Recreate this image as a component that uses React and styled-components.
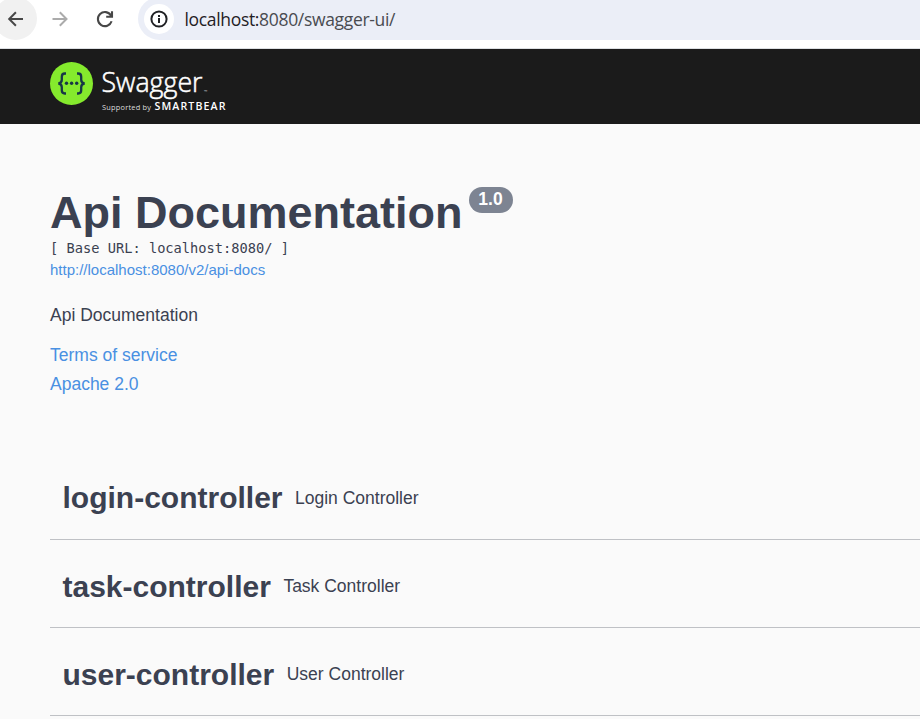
import React from "react";
import styled, { createGlobalStyle } from "styled-components";

const GlobalStyle = createGlobalStyle`
  * { box-sizing: border-box; }
  html, body { margin: 0; padding: 0; overflow: hidden; background: #fafafa; }
  body { font-family: "Liberation Sans", Arial, sans-serif; color: #3b4151; }
`;

const Page = styled.div`
  width: 100%;
  height: 100vh;
  overflow: hidden;
  white-space: nowrap;
`;

const BrowserBar = styled.div`
  display: flex;
  align-items: flex-start;
  height: 49px;
  background: #fff;
  border-bottom: 1px solid #dcdfe3;
`;

const NavButton = styled.button`
  flex: none;
  display: flex;
  align-items: center;
  justify-content: center;
  width: 43px;
  height: 43px;
  margin: -3px ${(p) => p.$gap}px 0 0;
  padding: 0;
  border: 0;
  border-radius: 50%;
  background: ${(p) => (p.$active ? "#f1f1f1" : "transparent")};
  color: ${(p) => p.$color};

  &:first-child { margin-left: -6px; }
`;

const AddressBar = styled.div`
  flex: 1;
  display: flex;
  align-items: center;
  height: 43px;
  margin-top: -3px;
  padding-left: 6px;
  background: #ebeef7;
  border-radius: 22px 0 0 22px;
`;

const SiteInfo = styled.div`
  display: flex;
  align-items: center;
  justify-content: center;
  width: 30px;
  height: 30px;
  margin: 1px 10.5px 0 0;
  border-radius: 50%;
  background: #fff;
`;

const Address = styled.span`
  font: 17.5px/24px "Open Sans", "Noto Sans", sans-serif;
  letter-spacing: -0.33px;
  color: #494b50;
  padding-top: 1px;
`;

const Host = styled.span`
  color: #1f2024;
`;

const TopBar = styled.header`
  height: 75px;
  padding: 12px 0 0 50px;
  background: #1b1b1b;
`;

const LogoSvg = styled.svg`
  display: block;
  overflow: visible;
`;

const Info = styled.section`
  padding: 62px 0 0 50px;
  height: 335px;
`;

const Title = styled.h1`
  display: flex;
  align-items: flex-start;
  gap: 6px;
  height: 52px;
  margin: 0;
  font-size: 45px;
  line-height: 54px;
  font-weight: 700;
`;

const Version = styled.span`
  width: 44px;
  height: 26px;
  margin-top: 1px;
  border-radius: 13px;
  background: #7d8492;
  color: #fff;
  font-size: 17.5px;
  line-height: 25px;
  text-align: center;
`;

const BaseUrl = styled.pre`
  margin: 0;
  height: 21px;
  font: 13.7px/21px "DejaVu Sans Mono", monospace;
`;

const Link = styled.a`
  display: block;
  width: max-content;
  color: #4990e2;
  text-decoration: none;
  font-size: ${(p) => (p.$small ? 15 : 17.5)}px;
  line-height: ${(p) => (p.$small ? 22 : 29)}px;
`;

const Description = styled.p`
  margin: 24px 0 16px;
  font-size: 17.5px;
  line-height: 20px;
  height: 20px;
`;

const TagList = styled.main`
  padding-left: 50px;
`;

const TagNote = styled.small`
  margin-left: 12.5px;
  font-size: 17.5px;
  font-weight: 400;
  line-height: 20px;
  padding-bottom: 2px;
`;

const Tag = styled.h3`
  display: flex;
  align-items: center;
  height: 88px;
  margin: 0;
  padding: 7px 12.5px 0;
  border-bottom: 1px solid #bfc1c5;
  font-size: 30px;
  line-height: 36px;

  &:first-child { height: 81px; padding: 0 12.5px 2px; }
  &:first-child ${TagNote} { padding-bottom: 1px; }
`;

const BackIcon = () => (
  <svg width="18" height="18" viewBox="0 0 18 18" fill="none" stroke="currentColor" strokeWidth="2">
    <path d="M16 9H2.5M8.9 2.3 2.2 9l6.7 6.7" />
  </svg>
);

const ForwardIcon = () => (
  <svg width="18" height="18" viewBox="0 0 18 18" fill="none" stroke="currentColor" strokeWidth="2">
    <path d="M1.5 9H15M8.8 2.3 15.5 9l-6.7 6.7" />
  </svg>
);

const ReloadIcon = () => (
  <svg width="18" height="18" viewBox="0 0 18 18" fill="none" stroke="currentColor" strokeWidth="2.1">
    <path d="M15 5.6A7 7 0 1 0 15.6 11.2M16 1.2v5.6h-5.8" />
  </svg>
);

const InfoIcon = () => (
  <svg width="18" height="18" viewBox="0 0 18 18" fill="none" stroke="#202124" strokeWidth="2">
    <circle cx="9" cy="9" r="7.6" />
    <path d="M9 8v5M9 5v2" />
  </svg>
);

const Logo = () => (
  <LogoSvg width="180" height="54" viewBox="0 0 180 54">
    <circle cx="21.5" cy="22.5" r="21.5" fill="#85ea2d" />
    <g fill="none" stroke="#173647" strokeWidth="2.3">
      <path d="M16 12.5h-1.2q-3 0-3 3.2v3.1q0 3.2-3.4 3.7 3.4.5 3.4 3.7v3.1q0 3.2 3 3.2H16" />
      <path d="M27 12.5h1.2q3 0 3 3.2v3.1q0 3.2 3.4 3.7-3.4.5-3.4 3.7v3.1q0 3.2-3 3.2H27" />
    </g>
    <g fill="#173647">
      <circle cx="16.5" cy="22.3" r="1.7" />
      <circle cx="21.6" cy="22.3" r="1.7" />
      <circle cx="26.7" cy="22.3" r="1.7" />
    </g>
    <g fill="#fff" fontFamily="'Open Sans', 'Noto Sans', sans-serif">
      <text x="51.5" y="31" fontSize="28" fontWeight="300" stroke="#fff" strokeWidth="0.55" textLength="101" lengthAdjust="spacingAndGlyphs">Swagger</text>
      <text x="154" y="31.5" fontSize="4.5" fill="#ccc">™</text>
      <text x="52" y="48.5" fontSize="7.4" fill="#ddd" textLength="49" lengthAdjust="spacing">Supported by</text>
      <text x="104.5" y="49" fontSize="10.6" fontWeight="600" textLength="71" lengthAdjust="spacing">SMARTBEAR</text>
    </g>
  </LogoSvg>
);

const tags = [
  ["login-controller", "Login Controller"],
  ["task-controller", "Task Controller"],
  ["user-controller", "User Controller"],
];

export default function App() {
  return (
    <Page>
      <GlobalStyle />
      <BrowserBar>
        <NavButton $active $color="#474747" $gap={1} aria-label="Back"><BackIcon /></NavButton>
        <NavButton $color="#ababab" $gap={2} aria-label="Forward"><ForwardIcon /></NavButton>
        <NavButton $color="#474747" $gap={12} aria-label="Reload"><ReloadIcon /></NavButton>
        <AddressBar>
          <SiteInfo><InfoIcon /></SiteInfo>
          <Address><Host>localhost:</Host>8080/swagger-ui/</Address>
        </AddressBar>
      </BrowserBar>
      <TopBar><Logo /></TopBar>
      <Info>
        <Title>Api Documentation<Version>1.0</Version></Title>
        <BaseUrl>[ Base URL: localhost:8080/ ]</BaseUrl>
        <Link $small href="#docs">http://localhost:8080/v2/api-docs</Link>
        <Description>Api Documentation</Description>
        <Link href="#terms">Terms of service</Link>
        <Link href="#license">Apache 2.0</Link>
      </Info>
      <TagList>
        {tags.map(([name, note]) => (
          <Tag key={name}>{name}<TagNote>{note}</TagNote></Tag>
        ))}
      </TagList>
    </Page>
  );
}
